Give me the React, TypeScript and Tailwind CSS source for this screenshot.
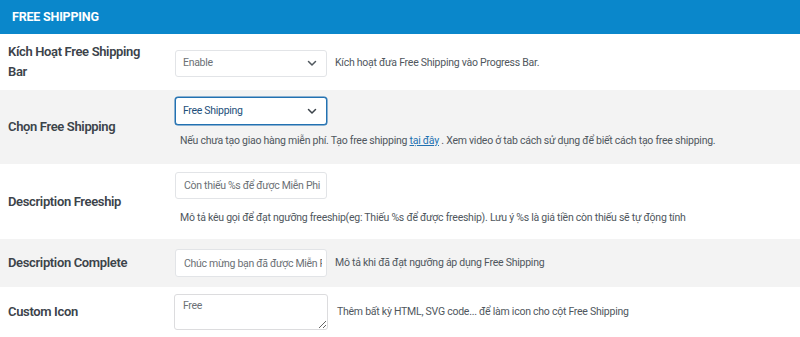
import React from "react";

const Chevron = ({ color = "#50575e" }: { color?: string }) => (
  <svg width="12" height="12" viewBox="0 0 12 12" fill="none">
    <path d="M2.5 4.5 L6 8 L9.5 4.5" stroke={color} strokeWidth="1.5" strokeLinecap="round" strokeLinejoin="round" />
  </svg>
);

const Label = ({ children }: { children: React.ReactNode }) => (
  <div className="w-[175px] shrink-0 pl-2 pr-2 text-[13px] tracking-[-0.35px] leading-[20px] font-semibold text-[#3c434a]">{children}</div>
);

const desc = "text-[10.5px] tracking-[-0.25px] text-[#50575e] whitespace-nowrap";
const field = "text-[10.5px] tracking-[-0.3px]";

export default function App() {
  return (
    <div className="w-[800px] h-[337px] overflow-hidden bg-white" style={{ fontFamily: "Roboto, 'Noto Sans', sans-serif" }}>
      <div className="h-[34px] bg-[#0a87cb] flex items-center pl-3">
        <span className="text-white font-bold text-[12.5px] tracking-[-0.2px]">FREE SHIPPING</span>
      </div>

      {/* Row 1 */}
      <div className="h-[56px] flex items-center bg-white">
        <Label>
          Kích Hoạt Free Shipping
          <br />
          Bar
        </Label>
        <div className="flex items-center pt-[2px]">
          <div className="w-[152px] h-[27px] border border-[#e2e4e7] rounded-[3px] bg-white flex items-center justify-between pl-[7px] pr-[8px]">
            <span className={`${field} text-[#6b7075]`}>Enable</span>
            <Chevron />
          </div>
          <span className={`ml-2 ${desc}`}>Kích hoạt đưa Free Shipping vào Progress Bar.</span>
        </div>
      </div>

      {/* Row 2 */}
      <div className="h-[74px] flex items-center bg-[#f3f3f3]">
        <Label>Chọn Free Shipping</Label>
        <div className="flex flex-col pt-[7px] pb-[15px] self-start">
          <div className="w-[152px] h-[28px] border border-[#2271b1] rounded-[3px] bg-white flex items-center justify-between pl-[7px] pr-[8px] shadow-[0_0_0_0.5px_#2271b1]">
            <span className={`${field} text-[#1e4f7a]`}>Free Shipping</span>
            <Chevron color="#3c434a" />
          </div>
          <div className={`mt-[7px] h-[18px] leading-[18px] pl-[5px] ${desc}`}>
            Nếu chưa tạo giao hàng miễn phí. Tạo free shipping{" "}
            <span className="text-[#2271b1] underline">tại đây</span> . Xem video ở tab cách sử dụng để biết cách tạo free shipping.
          </div>
        </div>
      </div>

      {/* Row 3 */}
      <div className="h-[75px] flex items-center bg-white">
        <Label>Description Freeship</Label>
        <div className="flex flex-col pt-[8px] self-start">
          <input
            readOnly
            value="Còn thiếu %s để được Miễn Phi"
            className={`w-[152px] h-[27px] border border-[#e2e4e7] rounded-[3px] bg-white pl-[8px] pr-[4px] ${field} text-[#6b7075] outline-none`}
          />
          <div className={`mt-[10px] h-[18px] leading-[18px] pl-[5px] ${desc}`}>
            Mô tả kêu gọi để đạt ngưỡng freeship(eg: Thiếu %s để được freeship). Lưu ý %s là giá tiền còn thiếu sẽ tự động tính
          </div>
        </div>
      </div>

      {/* Row 4 */}
      <div className="h-[48px] flex items-center bg-[#f3f3f3]">
        <Label>Description Complete</Label>
        <div className="flex items-center">
          <input
            readOnly
            value="Chúc mừng bạn đã được Miễn Phí"
            className={`w-[152px] h-[28px] border border-[#e2e4e7] rounded-[3px] bg-white pl-[8px] pr-[4px] ${field} text-[#6b7075] outline-none`}
          />
          <span className={`ml-2 ${desc}`}>Mô tả khi đã đạt ngưỡng áp dụng Free Shipping</span>
        </div>
      </div>

      {/* Row 5 */}
      <div className="h-[50px] flex items-center bg-white">
        <Label>Custom Icon</Label>
        <div className="flex items-center -ml-px">
          <textarea
            readOnly
            value="Free"
            className={`w-[154px] h-[36px] border border-[#dcdcde] rounded-[3px] bg-white pl-[8px] pt-[3px] ${field} leading-[16px] text-[#6b7075] outline-none resize`}
          />
          <span className={`ml-[9px] ${desc}`}>Thêm bất kỳ HTML, SVG code... để làm icon cho cột Free Shipping</span>
        </div>
      </div>
    </div>
  );
}
